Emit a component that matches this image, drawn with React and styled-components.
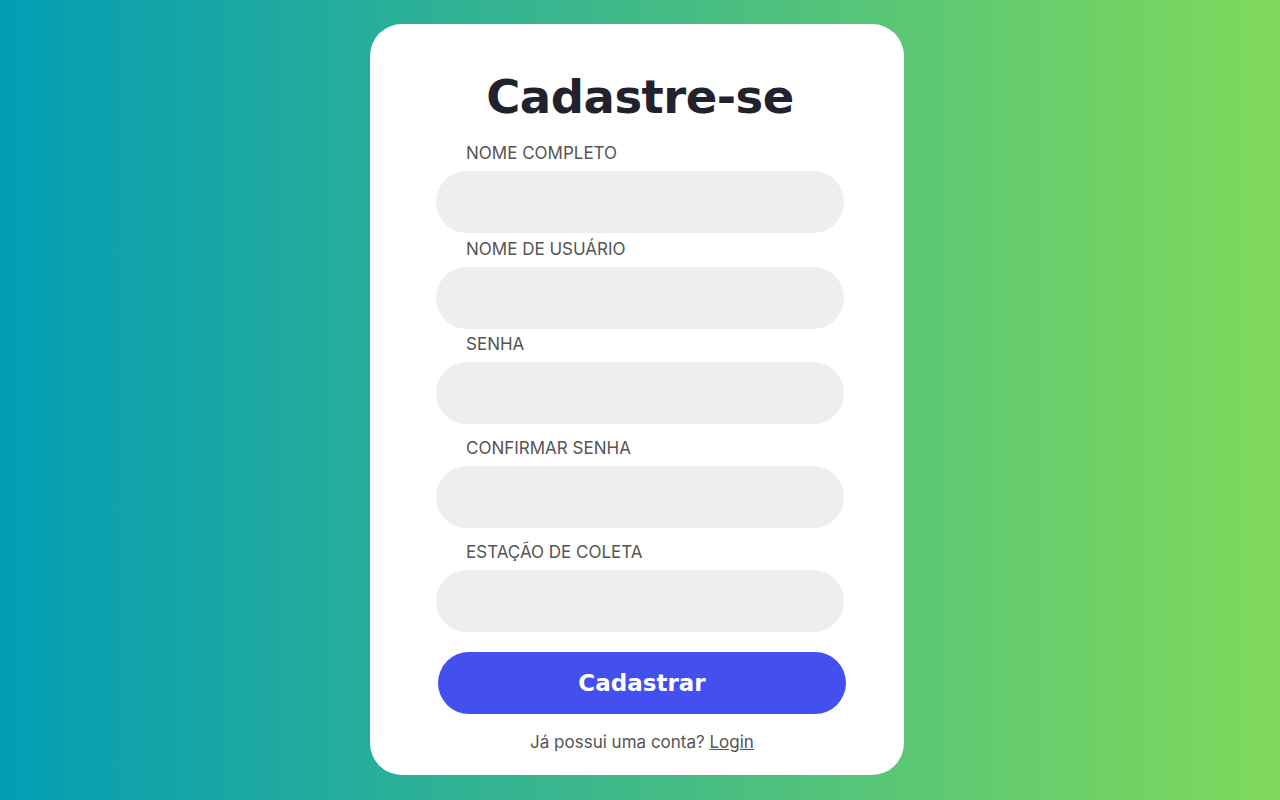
import React from 'react';
import styled, { createGlobalStyle } from 'styled-components';

const GlobalStyle = createGlobalStyle`
  * { box-sizing: border-box; }
  html, body {
    margin: 0;
    padding: 0;
    height: 100%;
  }
  body {
    font-family: Inter, "DejaVu Sans", sans-serif;
  }
`;

const Page = styled.div`
  width: 100%;
  height: 800px;
  background: linear-gradient(90deg, #039db4 0%, #3bb78c 45%, #80d95a 100%);
  display: flex;
  justify-content: center;
  padding: 24px 6px 0 0;
`;

const Card = styled.div`
  width: 534px;
  height: 751px;
  background: #fff;
  border-radius: 32px;
  padding: 44px 60px 0 66px;
  display: flex;
  flex-direction: column;
`;

const Title = styled.h1`
  margin: 0 0 16px;
  text-align: center;
  font-family: "DejaVu Sans", sans-serif;
  font-weight: 700;
  font-size: 46.5px;
  line-height: 58px;
  letter-spacing: -0.5px;
  color: #22222e;
`;

const Field = styled.div`
  display: flex;
  flex-direction: column;
  margin-top: ${(p) => p.$gap || 0}px;
`;

const Label = styled.label`
  padding-left: 30px;
  font-size: 17px;
  line-height: 22px;
  color: #555;
  margin-bottom: 7px;
`;

const Input = styled.input`
  width: 408px;
  height: 62px;
  border: none;
  outline: none;
  border-radius: 31px;
  background: #eeeeee;
  padding: 0 28px;
  font-size: 17px;
  font-family: inherit;
`;

const Button = styled.button`
  margin: 20px 0 0 2px;
  width: 408px;
  height: 62px;
  border: none;
  border-radius: 31px;
  background: #4350ef;
  color: #fff;
  font-family: "DejaVu Sans", sans-serif;
  font-weight: 700;
  font-size: 23px;
  cursor: pointer;
`;

const Footer = styled.p`
  margin: 18px 0 0;
  text-align: center;
  padding-left: 4px;
  font-size: 17px;
  color: #555;
`;

const LoginLink = styled.a`
  color: #555;
  text-decoration: underline;
`;

const fields = [
  { label: 'NOME COMPLETO', gap: 0 },
  { label: 'NOME DE USUÁRIO', gap: 5 },
  { label: 'SENHA', gap: 4, type: 'password' },
  { label: 'CONFIRMAR SENHA', gap: 13, type: 'password' },
  { label: 'ESTAÇÃO DE COLETA', gap: 13 },
];

export default function App() {
  return (
    <Page>
      <GlobalStyle />
      <Card>
        <Title>Cadastre-se</Title>
        {fields.map((f) => (
          <Field key={f.label} $gap={f.gap}>
            <Label>{f.label}</Label>
            <Input type={f.type || 'text'} />
          </Field>
        ))}
        <Button>Cadastrar</Button>
        <Footer>
          Já possui uma conta? <LoginLink href="#">Login</LoginLink>
        </Footer>
      </Card>
    </Page>
  );
}
